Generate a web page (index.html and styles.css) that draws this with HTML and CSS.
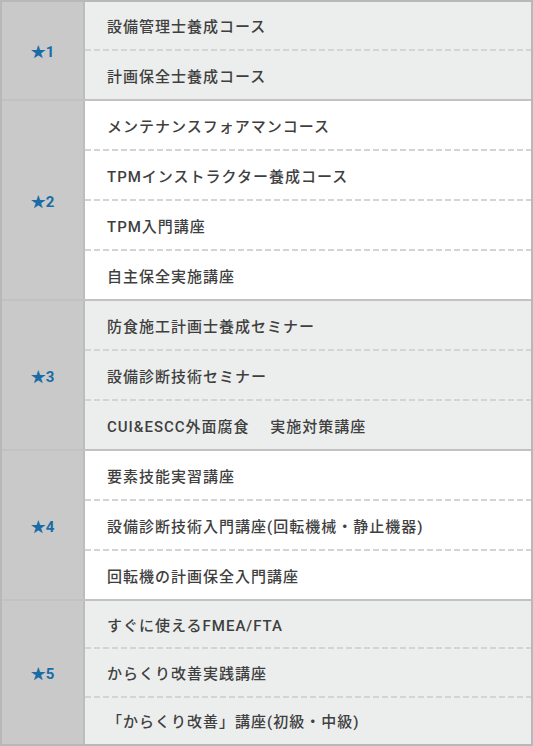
FILE: index.html
```html
<!DOCTYPE html>
<html lang="ja">
<head>
<meta charset="utf-8">
<link rel="stylesheet" href="styles.css">
</head>
<body>
<div class="table">
  <div class="group odd">
    <div class="label">★1</div>
    <div class="items">
      <div class="item">設備管理士養成コース</div>
      <div class="item">計画保全士養成コース</div>
    </div>
  </div>
  <div class="group even">
    <div class="label">★2</div>
    <div class="items">
      <div class="item">メンテナンスフォアマンコース</div>
      <div class="item">TPMインストラクター養成コース</div>
      <div class="item">TPM入門講座</div>
      <div class="item">自主保全実施講座</div>
    </div>
  </div>
  <div class="group odd">
    <div class="label">★3</div>
    <div class="items">
      <div class="item">防食施工計画士養成セミナー</div>
      <div class="item">設備診断技術セミナー</div>
      <div class="item">CUI&amp;ESCC外面腐食　&nbsp;実施対策講座</div>
    </div>
  </div>
  <div class="group even">
    <div class="label">★4</div>
    <div class="items">
      <div class="item">要素技能実習講座</div>
      <div class="item">設備診断技術入門講座(回転機械・静止機器)</div>
      <div class="item">回転機の計画保全入門講座</div>
    </div>
  </div>
  <div class="group odd last">
    <div class="label">★5</div>
    <div class="items">
      <div class="item">すぐに使えるFMEA/FTA</div>
      <div class="item">からくり改善実践講座</div>
      <div class="item">「からくり改善」講座(初級・中級)</div>
    </div>
  </div>
</div>
</body>
</html>
```
FILE: styles.css
```css
html, body {
  margin: 0;
  padding: 0;
  background: #ffffff;
}

.table {
  box-sizing: border-box;
  width: 533px;
  height: 746px;
  border: 2px solid #b8b8b8;
  display: flex;
  flex-direction: column;
  font-family: Roboto, "Noto Sans CJK JP", "Noto Sans", sans-serif;
}

.group {
  display: flex;
  flex: none;
}

.group.last {
  flex: 1 1 0;
  min-height: 0;
}

.group + .group {
  border-top: 2px solid #c2c2c2;
}

.label {
  box-sizing: border-box;
  width: 83px;
  flex: none;
  background: #c9c9c9;
  border-right: 2px solid #bdbdbd;
  display: flex;
  align-items: center;
  justify-content: center;
  color: #1a6ca6;
  font-size: 15px;
  font-weight: 700;
  letter-spacing: 0;
}

.items {
  flex: 1;
  display: flex;
  flex-direction: column;
}

.odd .items { background: #eceeed; }
.even .items { background: #ffffff; }

.item {
  box-sizing: border-box;
  height: 48px;
  flex: none;
  display: flex;
  align-items: center;
  padding-left: 22px;
  color: #3f3f3f;
  font-size: 15px;
  font-weight: 500;
  letter-spacing: 1px;
}

.item + .item {
  height: 50px;
  padding-top: 2px;
  background: repeating-linear-gradient(to right, #d4d4d4 0 6px, transparent 6px 9px) top left / 100% 2px no-repeat;
}

.group:first-child .item:first-child {
  height: 47px;
}

.last .item {
  flex: 1 1 0;
  height: auto;
  min-height: 0;
}
```
